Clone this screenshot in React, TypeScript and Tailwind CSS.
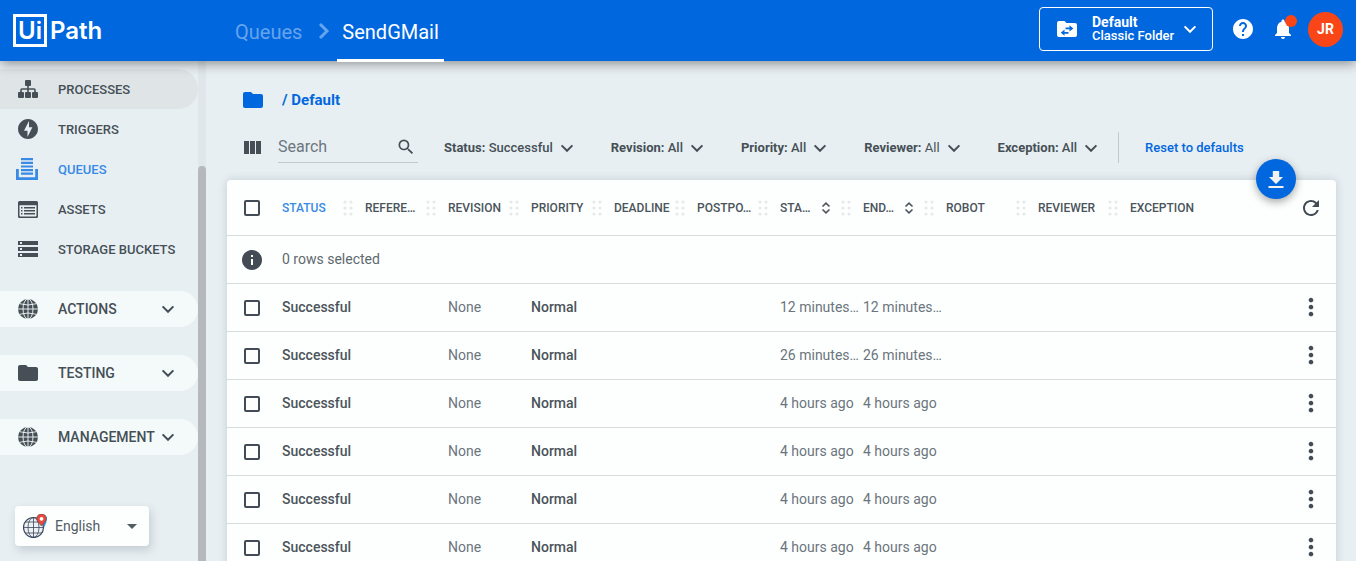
import React from "react";
import {
  MdArrowDropDown,
  MdFolder,
  MdHelp,
  MdInfo,
  MdMoreVert,
  MdNotifications,
  MdOfflineBolt,
  MdRefresh,
  MdSearch,
  MdStorage,
} from "react-icons/md";

type IconProps = { className?: string };

function Chevron({ className = "" }: IconProps) {
  return (
    <svg viewBox="0 0 14 14" className={"h-3.5 w-3.5 shrink-0 " + className} fill="none" stroke="currentColor" strokeWidth="2" aria-hidden="true">
      <path d="M1.6 4.4 7 9.8l5.4-5.4" />
    </svg>
  );
}

function SitemapIcon() {
  return (
    <svg viewBox="0 0 20 18" className="h-[18px] w-5" fill="currentColor" aria-hidden="true">
      <rect x="7" y="0" width="6" height="6" rx="1" />
      <rect x="0" y="12" width="6" height="6" rx="1" />
      <rect x="7" y="12" width="6" height="6" rx="1" />
      <rect x="14" y="12" width="6" height="6" rx="1" />
      <path d="M10 5v8M3 13V10q0-1 1-1h12q1 0 1 1v3" fill="none" stroke="currentColor" strokeWidth="1.6" />
    </svg>
  );
}

function QueueIcon() {
  return (
    <svg viewBox="0 0 22 22" className="mr-0.5 h-[22px] w-[22px]" fill="currentColor" aria-hidden="true">
      <path d="M5 0h12v2.2H5zM5 3.7h12v2.2H5zM5 7.4h12v2.2H5zM5 11h12v2.2H5zM5 14.6h12v2.2H5z" />
      <path d="M0 11h2.8v8.2h16.4V11H22v11H0z" />
    </svg>
  );
}

function AssetIcon() {
  return (
    <svg viewBox="0 0 20 17" className="h-[17px] w-5" fill="currentColor" aria-hidden="true">
      <path fillRule="evenodd" d="M1.5 0h17Q20 0 20 1.5v14q0 1.5-1.5 1.5h-17Q0 17 0 15.500v-14Q0 0 1.500 0zM1.500 4.300v10.200q0 1 1 1h15q1 0 1-1V4.300z" />
      <path d="M3 6h1.500v1.500H3zM6 6h11v1.500H6zM3 9h1.500v1.500H3zM6 9h11v1.500H6zM3 12h1.500v1.500H3zM6 12h11v1.500H6z" />
    </svg>
  );
}

function GlobeIcon() {
  return (
    <svg viewBox="0 0 20 20" className="h-5 w-5" aria-hidden="true">
      <circle cx="10" cy="10" r="10" fill="currentColor" />
      <g fill="none" stroke="#f4fafa" strokeWidth="0.9">
        <path d="M10 0v20M0 10h20M2 4.800q8 2.400 16 0M2 15.200q8-2.400 16 0" />
        <ellipse cx="10" cy="10" rx="5" ry="10" />
      </g>
    </svg>
  );
}

function LanguageIcon() {
  return (
    <svg viewBox="0 0 24 24" className="pointer-events-none h-6 w-6" fill="none" aria-hidden="true">
      <path d="M15 2q7-3 9 1.500 0 6-4 11.500z" fill="#2f9fe0" />
      <circle cx="10.500" cy="13.500" r="10" fill="#eef1f4" stroke="#39465c" strokeWidth="1.200" />
      <g stroke="#39465c" strokeWidth="0.800">
        <path d="M10.500 3.500v20M.5 13.500h20M2.500 8h16M2.500 19h16" />
        <ellipse cx="10.500" cy="13.500" rx="5.500" ry="10" />
      </g>
      <path d="M18.500 12c-3-3.200-4.800-5.200-4.800-7.400a4.800 4.800 0 0 1 9.600 0c0 2.200-1.800 4.200-4.800 7.400z" fill="#ea4a3c" stroke="#54404f" strokeWidth=".6" />
      <circle cx="18.500" cy="4.800" r="1.900" fill="#fff" />
    </svg>
  );
}

function FolderSwapIcon() {
  return (
    <svg viewBox="0 0 20 16" className="h-4 w-5 shrink-0" aria-hidden="true">
      <path d="M2 0h5.500l2 2H18q2 0 2 2v10q0 2-2 2H2q-2 0-2-2V2Q0 0 2 0z" fill="#fff" />
      <path d="M8.500 6.600h4V4.200L16.300 7.400l-3.800 3.200V8.300h-4zM11.500 12.800h-4v2L3.800 11.800l3.700-3.300v2.500h4z" fill="#0067df" />
    </svg>
  );
}

function ColumnsIcon() {
  return (
    <svg viewBox="0 0 17 13" className="h-[13px] w-[17px]" fill="currentColor" aria-hidden="true">
      <path d="M0 0h5v13H0zM6 0h5v13H6zM12 0h5v13h-5z" />
    </svg>
  );
}

function DownloadIcon() {
  return (
    <svg viewBox="0 0 16 17" className="h-[17px] w-4" fill="#f2f2f2" aria-hidden="true">
      <path d="M4.800 0h6.400v6H15l-7 7-7-7h3.800zM.5 15h15v2H.5z" />
    </svg>
  );
}

function SortIcon() {
  return (
    <svg viewBox="0 0 10 12" className="h-3 w-2.5" fill="none" stroke="currentColor" strokeWidth="1.600" aria-hidden="true">
      <path d="M1.500 4.500 5 1.200l3.500 3.300M1.500 7.500 5 10.800l3.500-3.300" />
    </svg>
  );
}

function DragHandle() {
  return (
    <svg viewBox="0 0 10 16" className="h-4 w-2.5 shrink-0" fill="#e6e9ea" aria-hidden="true">
      {[2, 8, 14].map((y) => (
        <React.Fragment key={y}>
          <circle cx="2" cy={y} r="1.600" />
          <circle cx="8" cy={y} r="1.600" />
        </React.Fragment>
      ))}
    </svg>
  );
}

const links = [
  { label: "PROCESSES", icon: <SitemapIcon />, style: "bg-[#dfe5e7] text-[#464f56]" },
  { label: "TRIGGERS", icon: <MdOfflineBolt className="h-6 w-6" />, style: "text-[#464f56]" },
  { label: "QUEUES", icon: <QueueIcon />, style: "text-[#388ae5]" },
  { label: "ASSETS", icon: <AssetIcon />, style: "text-[#464f56]" },
  { label: "STORAGE BUCKETS", icon: <MdStorage className="h-6 w-6" />, style: "text-[#464f56]" },
];

const groups = [
  { label: "ACTIONS", icon: <GlobeIcon /> },
  { label: "TESTING", icon: <MdFolder className="h-6 w-6" /> },
  { label: "MANAGEMENT", icon: <GlobeIcon /> },
];

const filters = [
  { name: "Status", value: "Successful", weight: "font-medium" },
  { name: "Revision", value: "All", weight: "font-medium" },
  { name: "Priority", value: "All", weight: "font-medium" },
  { name: "Reviewer", value: "All", weight: "font-normal" },
  { name: "Exception", value: "All", weight: "font-medium" },
];

const columns = [
  { label: "STATUS", active: true },
  { label: "REFERE…" },
  { label: "REVISION" },
  { label: "PRIORITY" },
  { label: "DEADLINE" },
  { label: "POSTPO…" },
  { label: "STA…", sortable: true },
  { label: "END…", sortable: true },
  { label: "ROBOT" },
  { label: "REVIEWER" },
  { label: "EXCEPTION", last: true },
];

const rows = [
  "12 minutes…",
  "26 minutes…",
  "4 hours ago",
  "4 hours ago",
  "4 hours ago",
  "4 hours ago",
];

const checkbox =
  "mt-0.5 block h-4 w-4 appearance-none rounded-[2px] border-2 border-[#434c54] bg-transparent checked:bg-[#0067df]";

function Header() {
  return (
    <header className="relative z-10 flex h-[61px] shrink-0 items-center bg-[#0067df] text-white shadow-[0_2px_12px_rgba(0,0,0,0.45)]">
      <a href="#home" aria-label="UiPath" className="ml-[13px] flex w-[210px] items-center gap-[3px] font-['Inter',sans-serif] text-[24px] leading-6 font-semibold">
        <span className="flex h-[33px] w-[34px] items-center justify-center border-[3px] border-white">Ui</span>
        <span>Path</span>
      </a>
      <nav aria-label="Breadcrumb" className="flex h-full items-stretch pl-3 text-[20px]">
        <a href="#queues" className="flex items-center pt-0.5 text-[#66a4ec]">Queues</a>
        <span className="flex items-center pr-[7px] pl-4">
          <svg viewBox="0 0 12 18" className="h-[18px] w-3" fill="none" stroke="#66a4ec" strokeWidth="3" aria-hidden="true">
            <path d="M2 2l7 7-7 7" />
          </svg>
        </span>
        <a href="#send" aria-current="page" className="-mb-px flex items-center border-b-[3px] border-white px-[5px] pt-1">SendGMail</a>
      </nav>
      <div className="ml-auto flex items-center pr-[13px]">
        <button className="-mt-1 flex h-11 w-[174px] items-center rounded border border-white pr-3.5 pl-[17px] text-left">
          <FolderSwapIcon />
          <span className="ml-[15px] flex-1 text-[13px] leading-[13px] font-medium whitespace-nowrap">
            <span className="block text-[14px] font-bold">Default</span>
            Classic Folder
          </span>
          <Chevron className="mr-px" />
        </button>
        <button aria-label="Help" className="-mt-1 ml-[18px]"><MdHelp className="h-6 w-6" /></button>
        <button aria-label="Notifications" className="relative -mt-1 ml-4">
          <MdNotifications className="h-6 w-6" />
          <span className="absolute -top-0.5 -right-0.5 h-3 w-3 rounded-full bg-[#fa4616]" />
        </button>
        <button className="-mt-0.5 ml-[13px] flex h-[35px] w-[35px] items-center justify-center rounded-full bg-[#fa4616] text-[14px] font-bold">JR</button>
      </div>
    </header>
  );
}

function Sidebar() {
  return (
    <aside className="flex w-[206px] shrink-0 overflow-hidden">
      <div className="flex-1 pt-2">
        <nav aria-label="Main">
          {links.map((l) => (
            <a key={l.label} href={"#" + l.label.toLowerCase()} className={"flex h-10 items-center rounded-r-full pl-4 text-[13px] font-medium " + l.style}>
              <span className="mr-[18px] flex w-6 justify-center">{l.icon}</span>
              <span className="pt-0.5">{l.label}</span>
            </a>
          ))}
          <div className="mt-[22px] flex flex-col gap-7">
            {groups.map((g) => (
              <button key={g.label} className="flex h-9 items-center rounded-r-full bg-[#f4fafa] pr-[23px] pl-4 text-[14px] font-medium text-[#464f56]">
                <span className="mr-[18px] flex w-6 justify-center">{g.icon}</span>
                {g.label}
                <Chevron className="ml-auto" />
              </button>
            ))}
          </div>
        </nav>
        <div className="relative mt-[51px] ml-[15px] flex h-10 w-[134px] items-center rounded bg-[#fdfffe] text-[#525c64] shadow-[2px_4px_10px_rgba(60,80,95,0.22)]">
          <select aria-label="Language" className="h-full w-full appearance-none rounded pl-10 text-[14px]">
            <option>English</option>
          </select>
          <span className="pointer-events-none absolute left-2"><LanguageIcon /></span>
          <MdArrowDropDown className="pointer-events-none absolute right-[5px] h-6 w-6" />
        </div>
      </div>
      <div className="flex w-2 flex-col bg-[#e0e6ea] pt-[105px]">
        <div className="flex-1 rounded-t-full bg-[#b5b9bd]" />
      </div>
    </aside>
  );
}

function FilterBar() {
  return (
    <div className="flex h-[31px] items-center text-[#464f56]">
      <button aria-label="Columns" className="mr-[17px] ml-[17px]"><ColumnsIcon /></button>
      <label className="flex h-full w-[140px] items-center border-b border-[#c3cacf]">
        <input type="search" placeholder="Search" aria-label="Search" className="w-0 flex-1 bg-transparent text-[16px] outline-none placeholder:text-[#6b767e]" />
        <MdSearch className="mr-0.5 h-5 w-5" />
      </label>
      <div className="ml-[26px] flex gap-[37px]">
        {filters.map((f) => (
          <button key={f.name} aria-haspopup="listbox" className="flex items-center gap-[7px] text-[13px] whitespace-nowrap">
            <span className={f.weight}>
              <span className="font-bold">{f.name}:</span> {f.value}
            </span>
            <Chevron />
          </button>
        ))}
      </div>
      <button className="ml-5 flex h-full items-center border-l border-[#c3cacf] pl-[26px] text-[13px] font-medium whitespace-nowrap text-[#0067df]">Reset to defaults</button>
    </div>
  );
}

function QueueTable() {
  return (
    <div className="relative mt-[17px] rounded-t bg-[#fdfffe] shadow-[0_0_8px_rgba(60,80,95,0.22)]">
      <button aria-label="Download" className="absolute -top-[21px] right-10 flex h-10 w-10 items-center justify-center rounded-full bg-[#0067df] shadow-[0_3px_8px_rgba(0,0,0,0.35)]">
        <DownloadIcon />
      </button>
      <table className="w-full table-fixed border-collapse text-left text-[14px] whitespace-nowrap text-[#6b757d]">
        <colgroup>
          <col className="w-[55px]" />
          {columns.slice(0, 8).map((c) => (
            <col key={c.label} className="w-[83px]" />
          ))}
          <col className="w-[92px]" />
          <col className="w-[92px]" />
          <col />
          <col className="w-[50px]" />
        </colgroup>
        <thead>
          <tr className="h-[55px] border-b border-[#d7dcdf] text-[12px] text-[#4b545b]">
            <th className="pl-[17px]"><input type="checkbox" aria-label="Select all" className={checkbox} /></th>
            {columns.map((c) => (
              <th key={c.label} className={c.active ? "pt-0.5 font-medium text-[#388ae5]" : "pt-0.5 font-medium"}>
                <div className="flex items-center pr-3">
                  <span className={c.sortable ? "w-8" : "flex-1"}>{c.label}</span>
                  {c.sortable && (
                    <button aria-label={"Sort by " + c.label} className="flex-1 pl-[9px]"><SortIcon /></button>
                  )}
                  {!c.last && <DragHandle />}
                </div>
              </th>
            ))}
            <th className="pt-0.5"><button aria-label="Refresh" className="block pl-[13px] text-[#434c54]"><MdRefresh className="h-6 w-6" /></button></th>
          </tr>
          <tr className="h-12 border-b border-[#d7dcdf]">
            <th className="pt-0.5 pl-[13px] text-[#434c54]"><MdInfo className="h-6 w-6" /></th>
            <td colSpan={12} className="text-[#5f6970]">0 rows selected</td>
          </tr>
        </thead>
        <tbody>
          {rows.map((time, i) => (
            <tr key={i} className="h-12 border-b border-[#d7dcdf]">
              <td className="pl-[17px]"><input type="checkbox" aria-label={"Select row " + (i + 1)} className={checkbox} /></td>
              <td className="font-medium text-[#4b545b]">Successful</td>
              <td />
              <td>None</td>
              <td className="font-medium text-[#4b545b]">Normal</td>
              <td />
              <td />
              <td>{time}</td>
              <td>{time}</td>
              <td />
              <td />
              <td />
              <td><button aria-label="More actions" className="block pl-[11px] text-[#434c54]"><MdMoreVert className="h-7 w-7" /></button></td>
            </tr>
          ))}
        </tbody>
      </table>
    </div>
  );
}

export default function App() {
  return (
    <div className="flex h-screen flex-col overflow-hidden bg-[#e8eff3] font-['Roboto',sans-serif]">
      <Header />
      <div className="flex min-h-0 flex-1">
        <Sidebar />
        <main className="min-w-0 flex-1 overflow-hidden pt-[27px] pr-5 pl-[21px]">
          <a href="#default" className="mb-5 flex h-6 items-center gap-[17px] pl-3.5 text-[15px] font-bold text-[#0067df]">
            <MdFolder className="h-6 w-6" />
            / Default
          </a>
          <FilterBar />
          <QueueTable />
        </main>
      </div>
    </div>
  );
}
